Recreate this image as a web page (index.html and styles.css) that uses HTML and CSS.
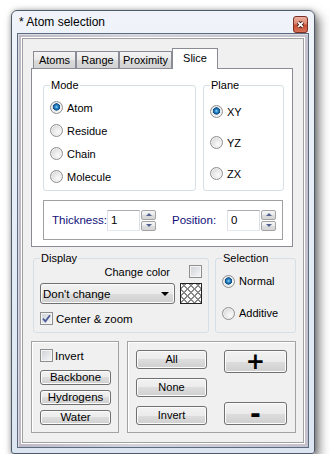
FILE: index.html
```html
<!DOCTYPE html>
<html lang="en">
<head>
    <meta charset="UTF-8">
    <meta name="viewport" content="width=device-width, initial-scale=1.0">
    <title>Atom selection</title>
    <link rel="stylesheet" href="styles.css">
</head>
<body>
    <div class="window">
        <div class="titlebar">
            <span class="title">* Atom selection</span>
            <span class="close">
                <svg width="15" height="17" viewBox="0 0 15 17">
                    <defs>
                        <linearGradient id="cg" x1="0" y1="0" x2="0" y2="1">
                            <stop offset="0" stop-color="#eeb5a6"/>
                            <stop offset="0.48" stop-color="#d9826c"/>
                            <stop offset="0.52" stop-color="#c54a30"/>
                            <stop offset="1" stop-color="#d9745a"/>
                        </linearGradient>
                    </defs>
                    <rect x="0.5" y="0.5" width="14" height="16" rx="2.5" fill="url(#cg)" stroke="#7a3126"/>
                    <path d="M5.2 6.3l4.6 4.6M9.8 6.3l-4.6 4.6" stroke="#3e1b16" stroke-width="3.6"/>
                    <path d="M5.2 6.3l4.6 4.6M9.8 6.3l-4.6 4.6" stroke="#fff" stroke-width="1.8"/>
                </svg>
            </span>
        </div>
        <div class="client">
            <div class="content">
                <div class="tabs">
                    <div class="tab w-atoms">Atoms</div>
                    <div class="tab w-range">Range</div>
                    <div class="tab w-prox">Proximity</div>
                    <div class="tab active w-slice">Slice</div>
                </div>
                <div class="panel">
                    <div class="panel-row">
                        <fieldset class="group mode">
                            <legend>Mode</legend>
                            <label class="opt"><span class="radio on"></span>Atom</label>
                            <label class="opt"><span class="radio"></span>Residue</label>
                            <label class="opt"><span class="radio"></span>Chain</label>
                            <label class="opt"><span class="radio"></span>Molecule</label>
                        </fieldset>
                        <fieldset class="group plane">
                            <legend>Plane</legend>
                            <label class="opt"><span class="radio on"></span>XY</label>
                            <label class="opt"><span class="radio"></span>YZ</label>
                            <label class="opt"><span class="radio"></span>ZX</label>
                        </fieldset>
                    </div>
                    <div class="slicebox">
                        <span class="lbl">Thickness:</span>
                        <div class="spin">
                            <span class="field">1</span>
                            <div class="arrows"><span class="up"></span><span class="down"></span></div>
                        </div>
                        <span class="lbl pos">Position:</span>
                        <div class="spin">
                            <span class="field">0</span>
                            <div class="arrows"><span class="up"></span><span class="down"></span></div>
                        </div>
                    </div>
                </div>

                <div class="mid-row">
                    <fieldset class="group display">
                        <legend>Display</legend>
                        <div class="cc-row">
                            <span>Change color</span>
                            <span class="check"></span>
                        </div>
                        <div class="combo-row">
                            <div class="combo"><span class="combo-text">Don't change</span><span class="combo-arrow"></span></div>
                            <div class="swatch"></div>
                        </div>
                        <label class="chk-row">
                            <span class="check">
                                <svg width="9" height="9" viewBox="0 0 9 9"><path d="M1 4.6L3.4 7.4L8 1.2" fill="none" stroke="#4b5c99" stroke-width="1.8"/></svg>
                            </span>
                            Center &amp; zoom
                        </label>
                    </fieldset>
                    <fieldset class="group selection">
                        <legend>Selection</legend>
                        <label class="opt"><span class="radio on"></span>Normal</label>
                        <label class="opt"><span class="radio"></span>Additive</label>
                    </fieldset>
                </div>

                <div class="bottom-row">
                    <div class="box left-box">
                        <label class="chk-row inv"><span class="check"></span>Invert</label>
                        <div class="btn small">Backbone</div>
                        <div class="btn small">Hydrogens</div>
                        <div class="btn small">Water</div>
                    </div>
                    <div class="box right-box">
                        <div class="col">
                            <div class="btn mid">All</div>
                            <div class="btn mid">None</div>
                            <div class="btn mid">Invert</div>
                        </div>
                        <div class="col pm">
                            <div class="btn big">+</div>
                            <div class="btn big minus">-</div>
                        </div>
                    </div>
                </div>
            </div>
        </div>
    </div>
</body>
</html>
```

FILE: styles.css
```css
body {
    margin: 0;
    background: #fff;
    font-family: "Liberation Sans", Arial, sans-serif;
    font-size: 11px;
    color: #000;
}

.window {
    margin: 10px 0 0 11px;
    width: 304px;
    height: 444px;
    box-sizing: border-box;
    border: 1px solid #4f5a68;
    border-radius: 6px 6px 3px 3px;
    background: linear-gradient(#f0f4fa, #e6edf6 40%, #dbe5f1);
    box-shadow: 4px 5px 11px rgba(0, 0, 0, 0.55), 0 0 5px rgba(0, 0, 0, 0.25);
    display: flex;
    flex-direction: column;
}

.titlebar {
    height: 22px;
    display: flex;
    align-items: center;
    padding: 0 6px 0 7px;
}
.title {
    flex: 1;
    font-size: 12px;
}
.close {
    align-self: flex-end;
    height: 17px;
    display: flex;
}

.client {
    flex: 1;
    margin: 0 5px 5px;
    border: 1px solid #5b6b82;
    padding: 4px;
    background: linear-gradient(90deg, #bdbac6, #d3d1d9 40%, #c4c1cc);
    box-shadow: inset 1px 1px 0 #dddbe2;
    display: flex;
}
.content {
    flex: 1;
    border: 1px solid #a0a0a0;
    box-shadow: 0 0 0 1px #fff;
    background: #f0f0f0;
    padding: 9px 0 0 8px;
}

/* tabs */
.tabs {
    display: flex;
    align-items: flex-end;
    height: 21px;
    padding-left: 2px;
    margin-bottom: -1px;
    position: relative;
    z-index: 1;
}
.tab {
    box-sizing: border-box;
    height: 18px;
    border: 1px solid #898c95;
    background: linear-gradient(#f4f4f4, #e9e9e9 50%, #dcdcdc 50%, #d2d2d2);
    text-align: center;
    line-height: 16px;
}
.tab.active {
    height: 21px;
    border-bottom: none;
    background: #fff;
    line-height: 18px;
}
.w-atoms { width: 43px; }
.w-range { width: 43px; }
.w-prox { width: 53px; }
.w-slice { width: 46px; }

.panel {
    box-sizing: border-box;
    width: 262px;
    height: 179px;
    border: 1px solid #898c95;
    background: #fff;
    padding: 10px 0 0 11px;
}
.panel-row {
    display: flex;
    gap: 7px;
}

/* group boxes */
.group {
    margin: 0;
    padding: 4px 6px 0;
    border: 1px solid #d5dfe5;
    border-radius: 3px;
    box-sizing: border-box;
    min-width: 0;
}
.group legend {
    padding: 0 1px;
    line-height: 13px;
}
.mode { width: 153px; height: 112px; }
.plane { width: 81px; height: 112px; }
.mode .opt { height: 23px; }
.plane .opt { height: 31px; }

.opt {
    display: flex;
    align-items: center;
    gap: 4px;
}
.radio {
    box-sizing: border-box;
    width: 13px;
    height: 13px;
    border-radius: 50%;
    border: 1px solid #8d8f90;
    background: radial-gradient(circle at 65% 65%, #fbfbfb 0, #e8e8e8 45%, #c8c8c8 100%);
    box-shadow: inset 0 0 0 1px #f2f2f2;
}
.radio.on {
    background: radial-gradient(circle at 50% 45%, #8fd3f7 0, #2b88c8 1.6px, #0e4b86 3.4px, rgba(14, 75, 134, 0) 3.9px),
                radial-gradient(circle at 65% 65%, #fbfbfb 0, #e8e8e8 45%, #c8c8c8 100%);
}

.check {
    box-sizing: border-box;
    width: 13px;
    height: 13px;
    border: 1px solid #8e8f8f;
    background: linear-gradient(135deg, #cdd1d7, #f7f7f7);
    box-shadow: inset 0 0 0 1px #f4f4f4;
    display: inline-flex;
    align-items: center;
    justify-content: center;
    flex: none;
}

/* thickness / position */
.slicebox {
    box-sizing: border-box;
    width: 240px;
    height: 40px;
    margin-top: 9px;
    border: 1px solid #a0a0a0;
    display: flex;
    align-items: center;
    padding-left: 8px;
}
.lbl {
    width: 55px;
    color: #10107a;
    font-size: 11.5px;
}
.lbl.pos {
    margin-left: 16px;
}
.spin {
    display: flex;
    align-items: center;
    gap: 1px;
}
.field {
    box-sizing: border-box;
    width: 33px;
    height: 21px;
    border: 1px solid;
    border-color: #abadb3 #dbdfe6 #e3e9ef #e2e3ea;
    background: #fff;
    padding-left: 3px;
    line-height: 19px;
    font-size: 11.5px;
}
.arrows {
    display: flex;
    flex-direction: column;
    gap: 1px;
}
.arrows span {
    box-sizing: border-box;
    width: 15px;
    height: 10px;
    border: 1px solid #a3a3a3;
    border-radius: 2px;
    background: linear-gradient(#f6f6f6, #e9e9e9 50%, #dcdcdc 50%, #d6d6d6);
    display: flex;
    align-items: center;
    justify-content: center;
}
.up::after,
.down::after {
    content: "";
    border-left: 3px solid transparent;
    border-right: 3px solid transparent;
}
.up::after { border-bottom: 3px solid #51638c; }
.down::after { border-top: 3px solid #51638c; }

/* display / selection */
.mid-row {
    display: flex;
    gap: 6px;
    margin-top: 5px;
    padding-left: 2px;
}
.display { width: 176px; height: 81px; padding: 0 6px; }
.selection { width: 81px; height: 81px; padding: 0 6px; }
.selection .opt { height: 32px; }

.cc-row {
    display: flex;
    justify-content: flex-end;
    align-items: center;
    gap: 19px;
    height: 13px;
}
.combo-row {
    display: flex;
    gap: 5px;
    margin-top: 5px;
}
.combo {
    box-sizing: border-box;
    width: 135px;
    height: 21px;
    border: 1px solid #707070;
    border-radius: 3px;
    background: linear-gradient(#f2f2f2, #ebebeb 50%, #dddddd 50%, #cfcfcf);
    box-shadow: inset 0 0 0 1px #fbfbfb;
    display: flex;
    align-items: center;
    padding: 0 3px 0 2px;
}
.combo-text {
    flex: 1;
    font-size: 11.5px;
}
.combo-arrow {
    border-left: 4px solid transparent;
    border-right: 4px solid transparent;
    border-top: 4px solid #000;
    margin-right: 2px;
}
.swatch {
    box-sizing: border-box;
    width: 22px;
    height: 21px;
    border: 1px solid #222;
    background: repeating-linear-gradient(45deg, #fff 0 4px, #8a8a8a 4px 5px),
                #fff;
    position: relative;
}
.swatch::after {
    content: "";
    position: absolute;
    inset: 0;
    background: repeating-linear-gradient(-45deg, transparent 0 4px, #8a8a8a 4px 5px);
}
.chk-row {
    display: flex;
    align-items: center;
    gap: 3px;
    margin-top: 8px;
    font-size: 11.5px;
}

/* bottom boxes */
.bottom-row {
    display: flex;
    gap: 8px;
    margin-top: 8px;
}
.box {
    box-sizing: border-box;
    height: 92px;
    border: 1px solid #a3a3a3;
    box-shadow: inset 1px 1px 0 #fff;
}
.left-box {
    width: 88px;
    padding: 7px 0 0 8px;
}
.left-box .inv {
    margin-top: 0;
    gap: 2px;
}
.right-box {
    width: 169px;
    padding: 8px 0 0 8px;
    display: flex;
    gap: 17px;
}
.col {
    display: flex;
    flex-direction: column;
    gap: 9px;
}
.col.pm {
    height: 75px;
    justify-content: space-between;
}

.btn {
    box-sizing: border-box;
    border: 1px solid #707070;
    border-radius: 3px;
    background: linear-gradient(#f2f2f2, #ebebeb 50%, #dddddd 50%, #cfcfcf);
    box-shadow: inset 0 0 0 1px #fcfcfc;
    text-align: center;
}
.btn.small {
    width: 71px;
    height: 15px;
    line-height: 13px;
    margin-top: 5px;
    font-size: 11.5px;
}
.left-box .inv + .btn.small {
    margin-top: 8px;
}
.btn.mid {
    width: 71px;
    height: 19px;
    line-height: 17px;
}
.btn.big {
    width: 63px;
    height: 23px;
    font-family: "DejaVu Sans", sans-serif;
    font-weight: bold;
    font-size: 23px;
    line-height: 21px;
}
.btn.big.minus {
    font-size: 26px;
    line-height: 22px;
}
```
